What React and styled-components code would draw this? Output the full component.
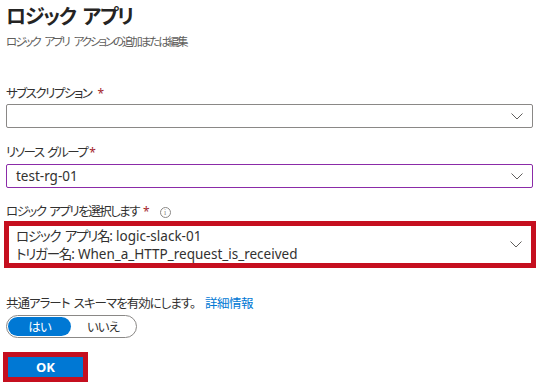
import React from "react";
import styled, { createGlobalStyle } from "styled-components";

const Global = createGlobalStyle`
  html, body { margin: 0; padding: 0; background: #ffffff; }
  body {
    font-family: "Noto Sans", "Noto Sans CJK JP", sans-serif;
    font-feature-settings: "palt";
    color: #323130;
  }
`;

const Page = styled.div`
  width: 527px;
  padding: 3px 10px 0 6px;
  display: flex;
  flex-direction: column;
`;

const Title = styled.h1`
  margin: 0;
  font-size: 20px;
  line-height: 28px;
  font-weight: 600;
  letter-spacing: -1.3px;
  word-spacing: 3px;
  color: #252423;
`;

const Subtitle = styled.div`
  margin-top: 3px;
  font-size: 11.5px;
  line-height: 16px;
  letter-spacing: -2.1px;
  word-spacing: 4px;
  color: #605e5c;
`;

const Label = styled.label`
  display: flex;
  align-items: center;
  white-space: pre;
  margin-top: ${(p) => p.$top}px;
  margin-bottom: ${(p) => p.$bottom ?? 1}px;
  font-size: 12.5px;
  line-height: 18px;
  color: #323130;
`;

const Jp = styled.span`
  white-space: pre;
  letter-spacing: ${(p) => p.$ls ?? -1.5}px;
  word-spacing: 2px;
`;

const Star = styled.span`
  color: #a4262c;
  font-size: 12px;
  margin-left: ${(p) => p.$gap ?? 4}px;
`;

const Info = styled.span`
  margin-left: 10px;
  width: 9px;
  height: 9px;
  border: 1px solid #8a8886;
  border-radius: 50%;
  font-size: 8px;
  line-height: 9px;
  text-align: center;
  color: #8a8886;
  font-family: "Liberation Serif", serif;
`;

const Select = styled.div`
  box-sizing: border-box;
  height: 24px;
  border: 1px solid ${(p) => (p.$focused ? "#8b2ba8" : "#8a8886")};
  border-radius: 2px;
  display: flex;
  align-items: center;
  padding: 0 9px 0 9px;
  font-size: 13.5px;
  color: #323130;
`;

const Value = styled.div`
  flex: 1;
  display: flex;
  flex-direction: column;
  line-height: 18px;
`;

const Highlight = styled.div`
  box-sizing: border-box;
  margin: 0 -3px 0 -2px;
  height: 47px;
  border: 5px solid #c50f1f;
  display: flex;
  align-items: center;
  padding: 0 9px 0 7px;
  font-size: 13.5px;
  color: #323130;
`;

const Chevron = () => (
  <svg width="12" height="7" viewBox="0 0 12 7">
    <polyline points="0.5,0.5 6,6 11.5,0.5" fill="none" stroke="#605e5c" strokeWidth="1" />
  </svg>
);

const Link = styled.a`
  color: #0078d4;
  text-decoration: none;
  margin-left: 10px;
  letter-spacing: -0.5px;
`;

const Toggle = styled.div`
  box-sizing: border-box;
  margin-top: 1px;
  width: 131px;
  height: 23px;
  border: 1px solid #8a8886;
  border-radius: 12px;
  display: flex;
  align-items: center;
  padding: 1px;
`;

const Option = styled.div`
  box-sizing: border-box;
  width: ${(p) => (p.$active ? 63 : 64)}px;
  height: 19px;
  border-radius: 10px;
  display: flex;
  align-items: center;
  justify-content: center;
  font-size: 12.5px;
  letter-spacing: -1px;
  background: ${(p) => (p.$active ? "#0078d4" : "transparent")};
  color: ${(p) => (p.$active ? "#ffffff" : "#323130")};
`;

const OkFrame = styled.div`
  margin: 14px 0 0 -3px;
  width: 85px;
  height: 30px;
  box-sizing: border-box;
  border: 5px solid #c50f1f;
  display: flex;
`;

const OkButton = styled.button`
  flex: 1;
  border: none;
  margin: 0;
  padding: 0;
  background: #0078d4;
  color: #ffffff;
  font-family: "Noto Sans", sans-serif;
  font-weight: 700;
  font-size: 13px;
`;

export default function App() {
  return (
    <>
      <Global />
      <Page>
        <Title>ロジック アプリ</Title>
        <Subtitle>ロジック アプリ アクションの追加または編集</Subtitle>

        <Label $top={35}>
          <Jp>サブスクリプション</Jp>
          <Star $gap={6}>*</Star>
        </Label>
        <Select>
          <Value />
          <Chevron />
        </Select>

        <Label $top={16} $bottom={2}>
          <Jp>リソース グループ</Jp>
          <Star $gap={2}>*</Star>
        </Label>
        <Select $focused>
          <Value>test-rg-01</Value>
          <Chevron />
        </Select>

        <Label $top={15} $bottom={0}>
          <Jp>ロジック アプリを選択します</Jp>
          <Star $gap={4}>*</Star>
          <Info>i</Info>
        </Label>
        <Highlight>
          <Value>
            <span>
              <Jp $ls={-1.2}>ロジック アプリ名: </Jp>logic-slack-01
            </span>
            <span>
              <Jp $ls={-1.2}>トリガー名: </Jp>When_a_HTTP_request_is_received
            </span>
          </Value>
          <Chevron />
        </Highlight>

        <Label $top={27}>
          <Jp $ls={-1}>共通アラート スキーマを有効にします。</Jp>
          <Link href="#">詳細情報</Link>
        </Label>
        <Toggle>
          <Option $active>はい</Option>
          <Option>いいえ</Option>
        </Toggle>

        <OkFrame>
          <OkButton>OK</OkButton>
        </OkFrame>
      </Page>
    </>
  );
}
